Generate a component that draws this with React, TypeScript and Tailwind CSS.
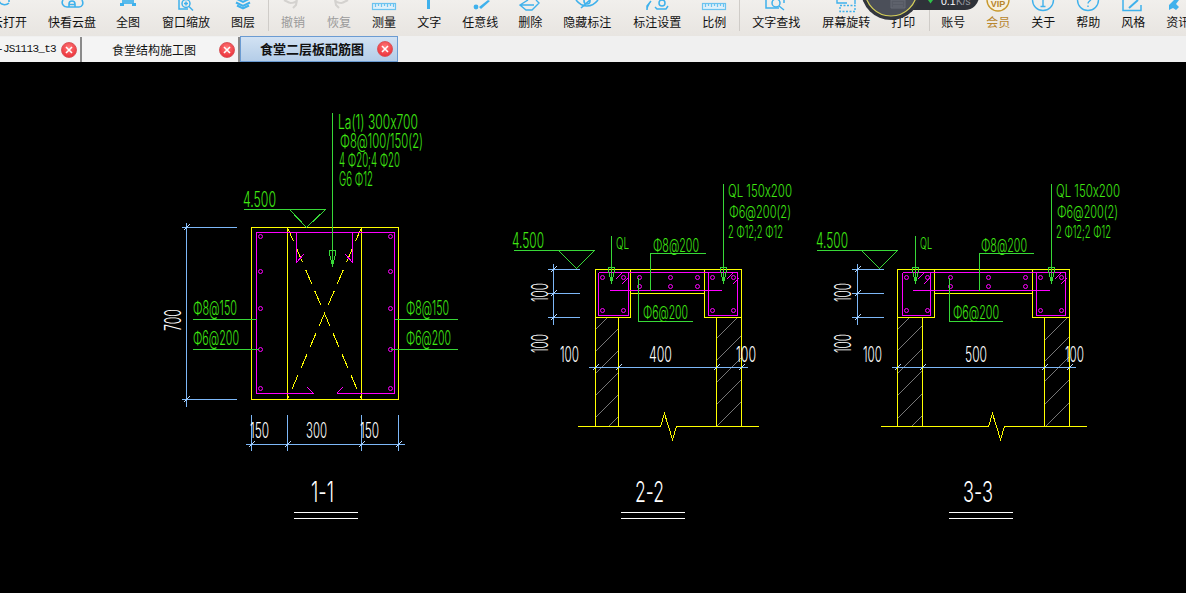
import React from 'react';

const GREEN = '#3fe812';
const LINE_GREEN = '#38d838';
const BLUE = '#7db8f8';
const YELLOW = '#ffff00';
const PINK = '#ff00ff';
const ICON = '#3fb1ec';

// ---------- toolbar icons (only the lower part is on screen, the window cuts the top off) ----------
const icons: Record<string, React.ReactNode> = {
  open: <path d="M2 1a6 5.5 0 0 0 10 2M12 -3v5" fill="none" stroke={ICON} strokeWidth="1.6" />,
  cloud: (
    <g fill="none" stroke={ICON} strokeWidth="1.6">
      <path d="M3 0c-2 3 0 7 4 7h12c3 0 5-3 3-7" />
      <path d="M9 7V4a3 3 0 0 1 6 0v3M8.5 4.5h7" />
    </g>
  ),
  full: (
    <g fill={ICON}>
      <rect x="6" y="0" width="12" height="4" opacity=".85" />
      <rect x="4" y="3" width="4" height="3" />
      <rect x="16" y="3" width="4" height="3" />
    </g>
  ),
  zoom: (
    <g fill="none" stroke={ICON} strokeWidth="1.5">
      <path d="M5 0v9h9" />
      <circle cx="12" cy="3.5" r="4" />
      <path d="M15 6.5l4 4M10 3.5h4M12 1.5v4" />
    </g>
  ),
  layer: (
    <g fill="none" stroke={ICON} strokeWidth="2">
      <path d="M6 -1l6 3 6-3" />
      <path d="M5 2.5l7 3.5 7-3.5" />
      <path d="M6 5.5l6 3 6-3" />
    </g>
  ),
  undo: <path d="M3 0l6 3M9 3c4 0 6-1 7-3M16 0l-1 5-3 3" fill="none" stroke="#d4d2cf" strokeWidth="2" />,
  redo: <path d="M21 0l-6 3M15 3c-4 0-6-1-7-3M8 0l1 5 3 3" fill="none" stroke="#d4d2cf" strokeWidth="2" />,
  ruler: (
    <g fill="none" stroke="#6cc3ef" strokeWidth="1.2">
      <rect x="0.5" y="3.5" width="23" height="6" fill="#dff0fa" />
      <path d="M3.5 4v3M6.5 4v2M9.5 4v3M12.5 4v2M15.5 4v3M18.5 4v2M21.5 4v3" />
    </g>
  ),
  text: <rect x="10" y="0" width="3" height="9" fill={ICON} />,
  pencil: (
    <g fill={ICON}>
      <path d="M20 0l-9 7 2 2 9-8z" />
      <circle cx="8" cy="7" r="2.4" />
    </g>
  ),
  erase: <path d="M10 0L2 5l6 5h6l7-7-3-3M2 5h14M14 10H8" fill="none" stroke={ICON} strokeWidth="1.4" />,
  eye: (
    <g fill="none" stroke={ICON} strokeWidth="1.6">
      <path d="M1 0c4 5 8 6 11 6s7-1 11-6" />
      <path d="M6 8L15 0" />
      <circle cx="12" cy="1" r="3" />
    </g>
  ),
  mark: (
    <g fill="none" stroke={ICON} strokeWidth="1.5">
      <path d="M2 10V6l4-5" fill={ICON} />
      <circle cx="17" cy="3" r="3" />
      <path d="M10 7l2 2h9l2-3" />
    </g>
  ),
  find: (
    <g fill="none" stroke={ICON} strokeWidth="1.5">
      <path d="M2 0v8h13" />
      <circle cx="12" cy="3" r="4" />
      <path d="M15 6l5 4M20 0v3" />
    </g>
  ),
  rotate: (
    <g fill="none" stroke={ICON} strokeWidth="1.4">
      <path d="M3 0v3h10" />
      <rect x="6" y="5.5" width="15" height="6" strokeDasharray="2 1.5" />
      <path d="M21 0v4" />
    </g>
  ),
  vip: (
    <g>
      <circle cx="12" cy="0" r="11" fill="#f7f1e0" stroke="#c8992e" strokeWidth="1.4" />
      <text x="12" y="7" textAnchor="middle" fontSize="9" fontWeight="700" fill="#b8862d" fontFamily="Liberation Sans">VIP</text>
    </g>
  ),
  about: (
    <g fill="none" stroke={ICON} strokeWidth="1.4">
      <circle cx="12" cy="0" r="10.5" />
      <path d="M12 -1v7M9.5 6.5h5" />
    </g>
  ),
  help: (
    <g fill="none" stroke={ICON} strokeWidth="1.4">
      <circle cx="12" cy="0" r="10.5" />
      <path d="M15 -1c0 2-3 2-3 4.500M12 5.500v1.500" />
    </g>
  ),
  style: (
    <g fill="none" stroke={ICON} strokeWidth="1.5">
      <path d="M2 0v10.500h18V5" />
      <path d="M8 8L17 0" strokeWidth="2" />
    </g>
  ),
  news: <path d="M3 10V5l5-5h5l-3 4 3 3-3 3-3-2z" fill={ICON} />,
};

const tools = [
  { label: '云打开', icon: 'open', cls: '-ml-[9px]' },
  { label: '快看云盘', icon: 'cloud', cls: 'ml-[21px]' },
  { label: '全图', icon: 'full', cls: 'ml-[20px]' },
  { label: '窗口缩放', icon: 'zoom', cls: 'ml-[22px]' },
  { label: '图层', icon: 'layer', cls: 'ml-[21px]' },
  { sep: true, cls: 'ml-[13px]' },
  { label: '撤销', icon: 'undo', cls: 'ml-[12px] text-[#9a9a9a]' },
  { label: '恢复', icon: 'redo', cls: 'ml-[22px] text-[#9a9a9a]' },
  { label: '测量', icon: 'ruler', cls: 'ml-[21px]' },
  { label: '文字', icon: 'text', cls: 'ml-[21px]' },
  { label: '任意线', icon: 'pencil', cls: 'ml-[21px]' },
  { label: '删除', icon: 'erase', cls: 'ml-[20px]' },
  { label: '隐藏标注', icon: 'eye', cls: 'ml-[21px]' },
  { label: '标注设置', icon: 'mark', cls: 'ml-[22px]' },
  { label: '比例', icon: 'ruler', cls: 'ml-[21px]' },
  { sep: true, cls: 'ml-[13px]' },
  { label: '文字查找', icon: 'find', cls: 'ml-[12px]' },
  { label: '屏幕旋转', icon: 'rotate', cls: 'ml-[22px]' },
  { label: '打印', icon: '', cls: 'ml-[21px]' },
  { sep: true, cls: 'ml-[14px]' },
  { label: '账号', icon: '', cls: 'ml-[11px]' },
  { label: '会员', icon: 'vip', cls: 'ml-[21px] text-[#b8862d]' },
  { label: '关于', icon: 'about', cls: 'ml-[21px]' },
  { label: '帮助', icon: 'help', cls: 'ml-[21px]' },
  { label: '风格', icon: 'style', cls: 'ml-[21px]' },
  { label: '资讯', icon: 'news', cls: 'ml-[21px]' },
];

const Toolbar = () => (
  <div className="relative flex h-[36px] shrink-0 overflow-hidden bg-gradient-to-b from-[#f1efec] to-[#e8e5e1] text-[12px] leading-[16px] text-[#111] font-['Noto_Sans_CJK_SC',sans-serif]">
    {tools.map((t, i) =>
      t.sep ? (
        <div key={i} className={`h-[31px] w-px shrink-0 bg-[#cfccc8] ${t.cls}`} />
      ) : (
        <div key={i} className={`flex shrink-0 flex-col items-center whitespace-nowrap ${t.cls}`}>
          <svg className="h-[14px] w-[24px] shrink-0 overflow-visible" viewBox="0 0 24 14">
            {t.icon ? icons[t.icon as string] : null}
          </svg>
          <span>{t.label}</span>
        </div>
      ),
    )}
    {/* floating net speed ball sitting over the toolbar */}
    <svg className="absolute left-[855px] top-0 h-[24px] w-[130px]" viewBox="0 0 130 24">
      <rect x="20" y="-22" width="104" height="32" rx="14" fill="#2f3239" />
      <circle cx="36" cy="-10" r="30" fill="#33363e" />
      <circle cx="36" cy="-10" r="26" fill="#4b4f59" stroke="#d8d25a" strokeWidth="1.2" />
      <path d="M36 0h14v8H36zM38 3h10M38 6h10" fill="#565a64" stroke="#666a75" />
      <path d="M73 0h5l-2.500 3.500z" fill="#2fc24a" />
      <text x="86" y="5" fontSize="10.500" fill="#fff" fontFamily="Liberation Sans">0.1</text>
      <text x="101" y="5" fontSize="10" fill="#9a9da5" fontFamily="Liberation Sans">K/s</text>
    </svg>
  </div>
);

// ---------- tabs ----------
const CloseDot = () => (
  <span className="flex h-[16px] w-[16px] shrink-0 items-center justify-center rounded-full border border-[#d8555a] bg-[radial-gradient(circle_at_50%_35%,#ff7a7a,#e8202a)]">
    <svg className="h-[8px] w-[8px]" viewBox="0 0 8 8">
      <path d="M1 1l6 6M7 1l-6 6" stroke="#fff" strokeWidth="1.6" />
    </svg>
  </span>
);

const Tabs = () => (
  <div className="flex h-[26px] shrink-0 items-end bg-[#f0f0f0] text-[12px] font-['Noto_Sans_CJK_SC',sans-serif] text-[#111]">
    <div className="flex h-[25px] w-[82px] items-center justify-end border-r-2 border-[#8a8a8a] bg-[#f4f4f4] pr-[3px]">
      <span className="mr-[5px] whitespace-nowrap font-['Liberation_Mono',monospace] text-[11px] tracking-[-0.7px]">-JS1113_t3</span>
      <CloseDot />
    </div>
    <div className="flex h-[25px] w-[158px] items-center border-r-2 border-[#8a8a8a] bg-[#f4f4f4] pr-[3px]">
      <span className="flex-1 pl-[7px] text-center">食堂结构施工图</span>
      <CloseDot />
    </div>
    <div className="flex h-[26px] w-[158px] items-center border border-[#6b9bd2] bg-gradient-to-b from-[#d2e2f3] to-[#b4cde8] pr-[4px] text-[13px] font-bold">
      <span className="flex-1 pl-[6px] text-center">食堂二层板配筋图</span>
      <CloseDot />
    </div>
  </div>
);

// ---------- CAD drawing helpers ----------
const cadFont = "font-['Inter',sans-serif] font-light [font-feature-settings:'calt'_0]";

type TxtProps = { x0: number; x1: number; y: number; h?: number; c?: string; children: string };

const Txt = ({ x0, x1, y, h = 14, c = GREEN, children }: TxtProps) => (
  <text x={x0} y={y} textLength={x1 - x0} lengthAdjust="spacingAndGlyphs" fontSize={h / 0.72} fill={c} className={cadFont}>
    {children}
  </text>
);

// text turned 90deg, reads upward from y0 to y1
const VTxt = ({ x, y0, y1, h = 16, children }: { x: number; y0: number; y1: number; h?: number; children: string }) => (
  <text
    transform={`translate(${x} ${y0}) rotate(-90)`}
    textLength={y0 - y1}
    lengthAdjust="spacingAndGlyphs"
    fontSize={h / 0.72}
    fill="#fff"
    className={cadFont}
  >
    {children}
  </text>
);

const L = ({ d, c }: { d: string; c: string }) => <path d={d} stroke={c} fill="none" />;

const Dots = ({ pts }: { pts: number[][] }) => (
  <g stroke={PINK} fill="none" shapeRendering="auto">
    {pts.map(([x, y], i) => (
      <circle key={i} cx={x} cy={y} r="2" />
    ))}
  </g>
);

const Tick = ({ x, y }: { x: number; y: number }) => <path d={`M${x - 3} ${y + 3}L${x + 3} ${y - 3}`} stroke="#bcdcff" />;

const Arrow = ({ x, tip }: { x: number; tip: number }) => (
  <path d={`M${x - 3} ${tip - 15}h6v4L${x} ${tip}L${x - 3} ${tip - 11}z`} stroke={LINE_GREEN} fill="none" />
);

const Hatch = ({ x0, x1, list }: { x0: number; x1: number; list: number[] }) => (
  <g stroke="#777777">
    {list.map((k) => {
      const a = Math.max(x0, k - 426);
      const b = Math.min(x1, k - 317);
      return <path key={k} d={`M${a} ${k - a}L${b} ${k - b}`} />;
    })}
  </g>
);

const Title = ({ x0, x1, lx0, lx1, children }: { x0: number; x1: number; lx0: number; lx1: number; children: string }) => (
  <g>
    <Txt x0={x0} x1={x1} y={502} h={20} c="#fff">{children}</Txt>
    <L d={`M${lx0} 512.5H${lx1}M${lx0} 518.5H${lx1}`} c="#fff" />
  </g>
);

// sections 2-2 and 3-3 share everything but their x positions
type SectionProps = {
  wall: [number, number, number, number];
  box: [number, number];
  rebarL: [number, number];
  rebarR: [number, number];
  bar: [number, number];
  dots: number[][];
  ground: [number, number, number];
  hatchL: number[];
  hatchR: number[];
  dimY: [number, number];
  dimX: number;
  leaderL: number;
  leaderR: number;
  elev: number;
  topLine: [number, number];
  botLine: [number, number];
};

const Section = (p: SectionProps) => {
  const [w0, w1, w2, w3] = p.wall;
  const [g0, zig, g1] = p.ground;
  return (
    <g>
      <Hatch x0={w0} x1={w1} list={p.hatchL} />
      <Hatch x0={w2} x1={w3} list={p.hatchR} />
      <L
        c={YELLOW}
        d={`M${w0} 426V269H${w3}V426M${w0} 317H${p.box[0]}V269M${p.box[0]} 293H${p.box[1]}M${p.box[1]} 269V317H${w3}M${w1} 317V426M${w2} 317V426M${g0} 426H${zig}l4 -13l8 26l4 -13H${g1}`}
      />
      <L
        c={PINK}
        d={`M${p.rebarL[0]} 272H${p.rebarR[1]}V315H${p.rebarR[0]}V272M${p.rebarL[0]} 272V315H${p.rebarL[1]}V272M${p.bar[0]} 290H${p.bar[1]}M${p.rebarL[1] - 13} 279l6 -6M${p.rebarL[1] - 7} 284l6 -6M${p.rebarR[1] - 11} 279l6 -6M${p.rebarR[1] - 5} 284l6 -6`}
      />
      <Dots pts={p.dots} />
      {/* dims */}
      <L
        c={BLUE}
        d={`M${p.dimX} 263V324M${p.dimX - 6} 269H${p.dimX + 26}M${p.dimX - 6} 293H${p.dimX + 26}M${p.dimX - 6} 317H${p.dimX + 26}M${p.dimY[0]} 367H${p.dimY[1]}`}
      />
      <Tick x={p.dimX} y={269} />
      <Tick x={p.dimX} y={293} />
      <Tick x={p.dimX} y={317} />
      {p.wall.map((x) => (
        <Tick key={x} x={x} y={367} />
      ))}
      {/* leaders */}
      <L
        c={LINE_GREEN}
        d={`M${p.leaderL} 235V282M${p.leaderR} 183V282M${p.elev} 250H${p.elev + 81}M${p.elev + 45} 250L${p.elev + 63} 268L${p.elev + 81} 250M${p.topLine[0]} 290V253H${p.topLine[1]}M${p.botLine[0]} 277V321H${p.botLine[1]}`}
      />
      <Arrow x={p.leaderL} tip={282} />
      <Arrow x={p.leaderR} tip={282} />
    </g>
  );
};

const Drawing = () => (
  <svg className="block h-[531px] w-[1186px]" viewBox="0 62 1186 531" shapeRendering="crispEdges">
    <g transform="translate(0.5 0.5)">
      {/* 1-1 */}
      <L c={YELLOW} d="M251 227H398V399H251ZM287 227V399M361 227V399" />
      <path d="M287 227L361 399M361 227L287 399" stroke={YELLOW} fill="none" strokeDasharray="15 8" />
      <L c={PINK} d="M296 262V232H256V393H313L307 387M336 393L342 387M336 393H394V232H296M352 232V262L345 254M296 262L303 254" />
      <Dots pts={[[260, 236], [260, 271], [260, 308], [260, 349], [260, 388], [390, 236], [390, 271], [390, 308], [390, 349], [390, 388]]} />
      <L c={BLUE} d="M186 222V406M181 227H236M181 399H236M251 414V450M287 414V450M361 414V450M398 414V450M245 444H404" />
      <Tick x={186} y={227} />
      <Tick x={186} y={399} />
      <Tick x={251} y={444} />
      <Tick x={287} y={444} />
      <Tick x={361} y={444} />
      <Tick x={398} y={444} />
      <L c={LINE_GREEN} d="M332 112V265M243 209H325M289 209L306 227L325 209M192 319H256M192 349H258M394 319H457M390 349H457" />
      <Arrow x={332} tip={265} />

      <Section
        wall={[595, 618, 716, 741]}
        box={[630, 704]}
        rebarL={[598, 628]}
        rebarR={[708, 737]}
        bar={[609, 721]}
        dots={[[602, 277], [623, 277], [602, 310], [623, 310], [639, 277], [670, 277], [697, 277], [639, 286], [670, 286], [697, 286], [712, 277], [733, 277], [712, 310], [733, 310]]}
        ground={[577, 660, 758]}
        hatchL={[924, 946, 968, 990, 1012, 1034]}
        hatchR={[1054, 1076, 1098, 1120, 1142]}
        dimY={[588, 747]}
        dimX={553}
        leaderL={611}
        leaderR={723}
        elev={513}
        topLine={[650, 705]}
        botLine={[638, 692]}
      />
      <Section
        wall={[897, 922, 1044, 1069]}
        box={[934, 1032]}
        rebarL={[902, 930]}
        rebarR={[1036, 1065]}
        bar={[912, 1049]}
        dots={[[906, 277], [927, 277], [906, 310], [927, 310], [950, 277], [988, 277], [1025, 277], [950, 286], [988, 286], [1025, 286], [1040, 277], [1061, 277], [1040, 310], [1061, 310]]}
        ground={[880, 988, 1086]}
        hatchL={[1226, 1247, 1270, 1292, 1315, 1337]}
        hatchR={[1384, 1405, 1425, 1448, 1471]}
        dimY={[891, 1075]}
        dimX={857}
        leaderL={915}
        leaderR={1051}
        elev={816}
        topLine={[979, 1033]}
        botLine={[949, 1002]}
      />
    </g>

    {/* text of the drawing, kept out of the crisp offset group */}
    <g shapeRendering="auto">
      <Txt x0={338} x1={418} y={129}>La(1) 300x700</Txt>
      <Txt x0={340} x1={423} y={148}>Φ8@100/150(2)</Txt>
      <Txt x0={339} x1={400} y={167}>4 Φ20;4 Φ20</Txt>
      <Txt x0={339} x1={373} y={186}>G6 Φ12</Txt>
      <Txt x0={243} x1={276} y={207} h={15}>4.500</Txt>
      <Txt x0={193} x1={237} y={315}>Φ8@150</Txt>
      <Txt x0={193} x1={239} y={345}>Φ6@200</Txt>
      <Txt x0={406} x1={449} y={315}>Φ8@150</Txt>
      <Txt x0={406} x1={451} y={345}>Φ6@200</Txt>
      <VTxt x={181} y0={331} y1={309}>700</VTxt>
      <Txt x0={250} x1={269} y={438} h={15} c="#fff">150</Txt>
      <Txt x0={306} x1={327} y={438} h={15} c="#fff">300</Txt>
      <Txt x0={360} x1={379} y={438} h={15} c="#fff">150</Txt>
      <Title x0={311} x1={334} lx0={294} lx1={358}>1-1</Title>

      <Txt x0={512} x1={544} y={248} h={15}>4.500</Txt>
      <Txt x0={616} x1={629} y={249} h={11}>QL</Txt>
      <Txt x0={728} x1={792} y={197} h={12}>QL 150x200</Txt>
      <Txt x0={729} x1={791} y={218} h={12}>Φ6@200(2)</Txt>
      <Txt x0={728} x1={783} y={238} h={12}>2 Φ12;2 Φ12</Txt>
      <Txt x0={653} x1={699} y={252} h={13}>Φ8@200</Txt>
      <Txt x0={643} x1={688} y={319} h={13}>Φ6@200</Txt>
      <VTxt x={548} y0={302} y1={283}>100</VTxt>
      <VTxt x={548} y0={353} y1={334}>100</VTxt>
      <Txt x0={560} x1={579} y={362} h={15} c="#fff">100</Txt>
      <Txt x0={649} x1={672} y={362} h={15} c="#fff">400</Txt>
      <Txt x0={736} x1={756} y={362} h={15} c="#fff">100</Txt>
      <Title x0={635} x1={664} lx0={621} lx1={685}>2-2</Title>

      <Txt x0={816} x1={848} y={248} h={15}>4.500</Txt>
      <Txt x0={920} x1={932} y={249} h={11}>QL</Txt>
      <Txt x0={1056} x1={1120} y={197} h={12}>QL 150x200</Txt>
      <Txt x0={1057} x1={1118} y={218} h={12}>Φ6@200(2)</Txt>
      <Txt x0={1056} x1={1111} y={238} h={12}>2 Φ12;2 Φ12</Txt>
      <Txt x0={981} x1={1027} y={252} h={13}>Φ8@200</Txt>
      <Txt x0={953} x1={999} y={319} h={13}>Φ6@200</Txt>
      <VTxt x={851} y0={302} y1={283}>100</VTxt>
      <VTxt x={851} y0={353} y1={334}>100</VTxt>
      <Txt x0={863} x1={882} y={362} h={15} c="#fff">100</Txt>
      <Txt x0={965} x1={987} y={362} h={15} c="#fff">500</Txt>
      <Txt x0={1065} x1={1084} y={362} h={15} c="#fff">100</Txt>
      <Title x0={963} x1={993} lx0={949} lx1={1013}>3-3</Title>
    </g>
  </svg>
);

export default function App() {
  return (
    <div className="flex h-[593px] w-[1186px] flex-col overflow-hidden bg-black">
      <Toolbar />
      <Tabs />
      <Drawing />
    </div>
  );
}
